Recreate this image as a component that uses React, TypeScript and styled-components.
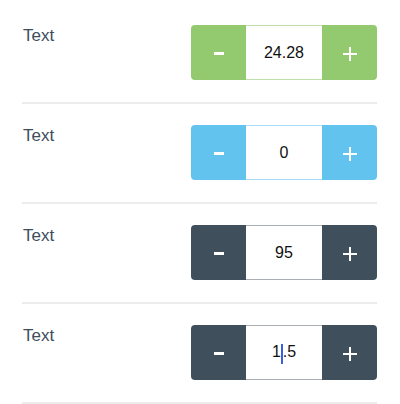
import React from "react";
import styled, { createGlobalStyle } from "styled-components";

const Global = createGlobalStyle`
  html, body { margin: 0; padding: 0; background: #ffffff; }
  body { font-family: "Liberation Sans", Arial, sans-serif; }
`;

const List = styled.div`
  padding: 4px 23px 0 22px;
  width: 400px;
  box-sizing: border-box;
`;

const Row = styled.div`
  display: flex;
  justify-content: space-between;
  align-items: flex-start;
  padding: 21px 0 22px;
  border-bottom: 2px solid #ececec;
`;

const Label = styled.div`
  font-size: 17px;
  line-height: 20px;
  color: #3d4e5d;
  padding-top: 1px;
  padding-left: 1px;
`;

const Stepper = styled.div`
  display: flex;
  height: 55px;
`;

const Btn = styled.div<{ $bg: string; $side: "left" | "right" }>`
  width: 55px;
  height: 55px;
  background: ${(p) => p.$bg};
  color: #ffffff;
  display: flex;
  align-items: center;
  justify-content: center;
  border-radius: ${(p) => (p.$side === "left" ? "4px 0 0 4px" : "0 4px 4px 0")};
  box-sizing: border-box;
`;

const Minus = styled.span`
  display: block;
  width: 10px;
  height: 3px;
  background: #ffffff;
  margin-top: 2px;
`;

const Plus = styled.span`
  position: relative;
  display: block;
  width: 14px;
  height: 14px;
  margin-top: 2px;
  &::before, &::after {
    content: "";
    position: absolute;
    background: #ffffff;
  }
  &::before { left: 0; right: 0; top: 6px; height: 2px; }
  &::after { top: 0; bottom: 0; left: 6px; width: 2px; }
`;

const Field = styled.div<{ $line: string }>`
  width: 76px;
  height: 55px;
  box-sizing: border-box;
  border-top: 1px solid ${(p) => p.$line};
  border-bottom: 1px solid ${(p) => p.$line};
  background: #ffffff;
  display: flex;
  align-items: center;
  justify-content: center;
  font-size: 16px;
  color: #111111;
  padding-top: 1px;
`;

const Caret = styled.span`
  display: inline-block;
  width: 2px;
  height: 20px;
  background: #3a5fe0;
  vertical-align: middle;
  position: relative;
  top: 1px;
`;

type Item = { value: React.ReactNode; bg: string; line: string };

const items: Item[] = [
  { value: "24.28", bg: "#93c96f", line: "#bfe0aa" },
  { value: "0", bg: "#63c3ef", line: "#a6dcf6" },
  { value: "95", bg: "#3f4f5c", line: "#a8aeb4" },
  {
    value: (
      <span>
        1<Caret />.5
      </span>
    ),
    bg: "#3f4f5c",
    line: "#a8aeb4",
  },
];

export default function App() {
  return (
    <>
      <Global />
      <List>
        {items.map((it, i) => (
          <Row key={i}>
            <Label>Text</Label>
            <Stepper>
              <Btn $bg={it.bg} $side="left">
                <Minus />
              </Btn>
              <Field $line={it.line}>{it.value}</Field>
              <Btn $bg={it.bg} $side="right">
                <Plus />
              </Btn>
            </Stepper>
          </Row>
        ))}
      </List>
    </>
  );
}
